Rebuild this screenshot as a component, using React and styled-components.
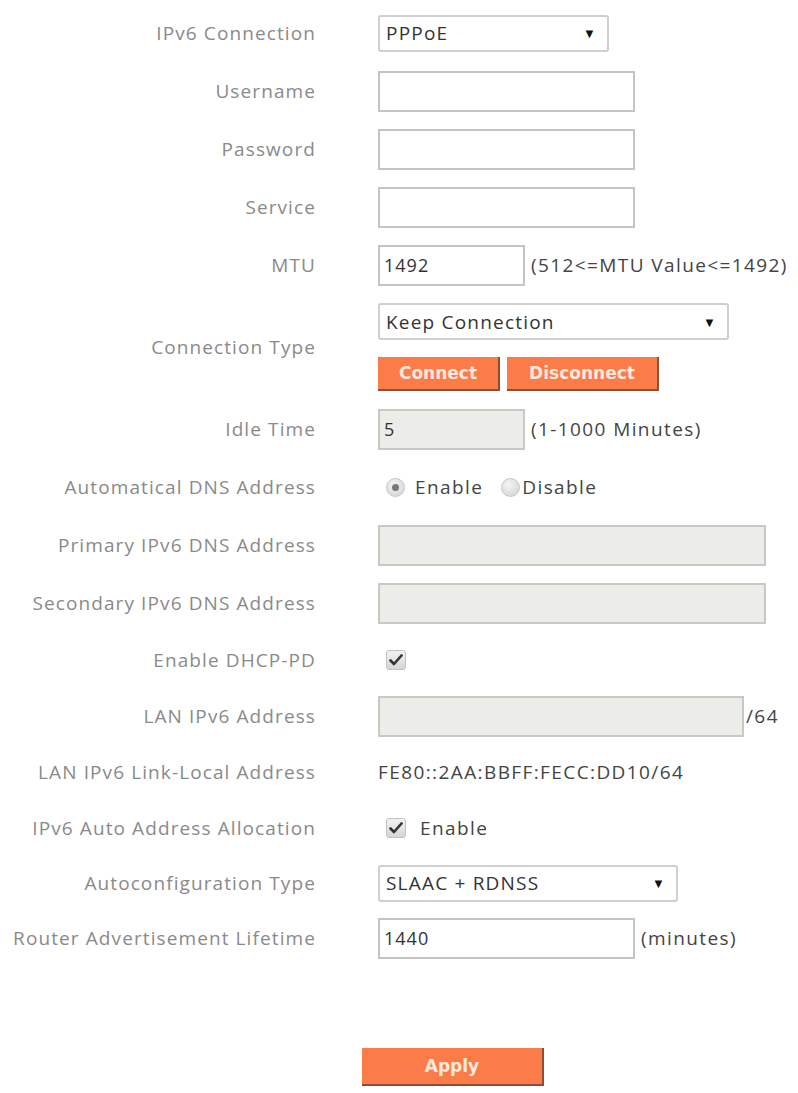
import React from 'react';
import styled, { createGlobalStyle } from 'styled-components';

const GlobalStyle = createGlobalStyle`
  body {
    margin: 0;
    background: #fff;
    font-family: "Open Sans", "Liberation Sans", sans-serif;
  }
`;

const Page = styled.div`
  width: 798px;
  padding-top: 4px;
`;

const Row = styled.div`
  display: grid;
  grid-template-columns: 316px 1fr;
  column-gap: 62px;
  align-items: center;
  height: ${(p) => p.h || 58}px;
`;

const Label = styled.div`
  text-align: right;
  font-size: 19px;
  letter-spacing: 1.1px;
  color: #8a8a8a;
  white-space: nowrap;
`;

const Field = styled.div`
  display: flex;
  align-items: center;
  gap: 6px;
  font-size: 19px;
  letter-spacing: 1.4px;
  color: #444;
  white-space: nowrap;
`;

const Stack = styled.div`
  display: flex;
  flex-direction: column;
  gap: 17px;
`;

const TextBox = styled.div`
  box-sizing: border-box;
  width: ${(p) => p.w || 257}px;
  height: 41px;
  border: 2px solid ${(p) => (p.disabled ? '#c8c8c4' : '#c4c4c4')};
  background: ${(p) => (p.disabled ? '#ecece8' : '#fff')};
  padding: 0 4px;
  display: flex;
  align-items: center;
  font-size: 18px;
  letter-spacing: 1px;
  color: #333;
`;

const Select = styled.div`
  box-sizing: border-box;
  width: ${(p) => p.w}px;
  height: 37px;
  border: 2px solid #cfcfcf;
  border-radius: 3px;
  background: #fff;
  padding: 0 10px 0 6px;
  display: flex;
  align-items: center;
  justify-content: space-between;
  font-size: 19px;
  letter-spacing: 1.2px;
  color: #333;
`;

const Arrow = styled.span`
  font-size: 13px;
  color: #111;
`;

const Note = styled.span`
  color: #444;
  margin-left: ${(p) => p.ml || 0}px;
`;

const OrangeButton = styled.button`
  box-sizing: border-box;
  width: ${(p) => p.w}px;
  height: ${(p) => p.h || 34}px;
  background: #fb7c48;
  border: none;
  border-right: 2px solid #8e4f35;
  border-bottom: 2px solid #8e4f35;
  color: #fde9df;
  font-family: "DejaVu Sans", "Liberation Sans", sans-serif;
  font-weight: bold;
  font-size: 17px;
  padding: 0;
  cursor: pointer;
`;

const ButtonRow = styled.div`
  display: flex;
  gap: 7px;
`;

const Radio = styled.span`
  box-sizing: border-box;
  flex: none;
  width: 19px;
  height: 19px;
  border-radius: 50%;
  border: 1px solid #c6c6c6;
  background: radial-gradient(circle at 40% 35%, #f4f4f4, #d0d0d0);
  display: inline-flex;
  align-items: center;
  justify-content: center;
  margin-left: ${(p) => p.ml || 0}px;
  margin-right: ${(p) => p.mr || 0}px;
  &::after {
    content: '';
    width: 7px;
    height: 7px;
    border-radius: 50%;
    background: ${(p) => (p.on ? '#777' : 'transparent')};
  }
`;

const Check = styled.span`
  box-sizing: border-box;
  flex: none;
  width: 20px;
  height: 20px;
  border-radius: 3px;
  border: 1px solid #c2c2c2;
  background: linear-gradient(#f2f2f2, #d6d6d6);
  display: inline-flex;
  align-items: center;
  justify-content: center;
  margin-left: 8px;
  margin-right: ${(p) => p.mr || 0}px;
`;

const Footer = styled.div`
  padding: 82px 0 0 362px;
`;

const Tick = () => (
  <svg width="14" height="12" viewBox="0 0 14 12">
    <path d="M1.5 6.5 L5 10 L12.5 1.5" fill="none" stroke="#333" strokeWidth="2.6" strokeLinecap="round" strokeLinejoin="round" />
  </svg>
);

export default function App() {
  return (
    <Page>
      <GlobalStyle />
      <Row>
        <Label>IPv6 Connection</Label>
        <Field>
          <Select w={231}>
            PPPoE <Arrow>▼</Arrow>
          </Select>
        </Field>
      </Row>
      <Row>
        <Label>Username</Label>
        <Field><TextBox /></Field>
      </Row>
      <Row>
        <Label>Password</Label>
        <Field><TextBox /></Field>
      </Row>
      <Row>
        <Label>Service</Label>
        <Field><TextBox /></Field>
      </Row>
      <Row>
        <Label>MTU</Label>
        <Field>
          <TextBox w={147}>1492</TextBox>
          <Note>(512&lt;=MTU Value&lt;=1492)</Note>
        </Field>
      </Row>
      <Row h={106}>
        <Label>Connection Type</Label>
        <Stack>
          <Select w={351}>
            Keep Connection <Arrow>▼</Arrow>
          </Select>
          <ButtonRow>
            <OrangeButton w={122}>Connect</OrangeButton>
            <OrangeButton w={152}>Disconnect</OrangeButton>
          </ButtonRow>
        </Stack>
      </Row>
      <Row>
        <Label>Idle Time</Label>
        <Field>
          <TextBox w={147} disabled>5</TextBox>
          <Note>(1-1000 Minutes)</Note>
        </Field>
      </Row>
      <Row>
        <Label>Automatical DNS Address</Label>
        <Field>
          <Radio on ml={8} mr={4} /> Enable
          <Radio ml={12} mr={-4} /> Disable
        </Field>
      </Row>
      <Row>
        <Label>Primary IPv6 DNS Address</Label>
        <Field><TextBox w={388} disabled /></Field>
      </Row>
      <Row>
        <Label>Secondary IPv6 DNS Address</Label>
        <Field><TextBox w={388} disabled /></Field>
      </Row>
      <Row h={56}>
        <Label>Enable DHCP-PD</Label>
        <Field><Check><Tick /></Check></Field>
      </Row>
      <Row h={56}>
        <Label>LAN IPv6 Address</Label>
        <Field>
          <TextBox w={366} disabled />
          <Note ml={-4}>/64</Note>
        </Field>
      </Row>
      <Row h={56}>
        <Label>LAN IPv6 Link-Local Address</Label>
        <Field>FE80::2AA:BBFF:FECC:DD10/64</Field>
      </Row>
      <Row h={56}>
        <Label>IPv6 Auto Address Allocation</Label>
        <Field>
          <Check mr={8}><Tick /></Check> Enable
        </Field>
      </Row>
      <Row h={54}>
        <Label>Autoconfiguration Type</Label>
        <Field>
          <Select w={300}>
            SLAAC + RDNSS <Arrow>▼</Arrow>
          </Select>
        </Field>
      </Row>
      <Row h={56}>
        <Label>Router Advertisement Lifetime</Label>
        <Field>
          <TextBox w={257}>1440</TextBox>
          <Note>(minutes)</Note>
        </Field>
      </Row>
      <Footer>
        <OrangeButton w={182} h={38}>Apply</OrangeButton>
      </Footer>
    </Page>
  );
}
